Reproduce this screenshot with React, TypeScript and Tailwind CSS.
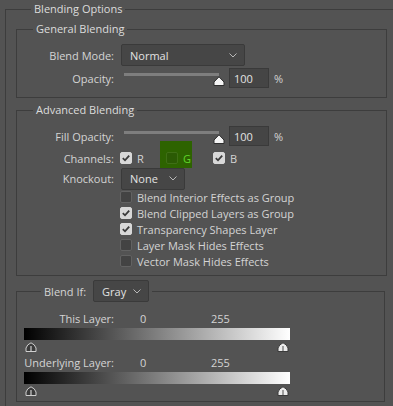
import type { ReactNode } from 'react';

function Chevron() {
  return (
    <svg width="8" height="5" viewBox="0 0 8 5" className="shrink-0">
      <path d="M0.5 0.5 L4 4 L7.5 0.5" fill="none" stroke="#b8b8b8" strokeWidth="1" />
    </svg>
  );
}

function Select({ value, width }: { value: string; width: string }) {
  return (
    <div
      className={`${width} h-[22px] flex items-center justify-between pl-[8px] pr-[7px] rounded-[2px] bg-[#464646] border border-[#3a3a3a] text-[#e2e2e2]`}
    >
      <span>{value}</span>
      <Chevron />
    </div>
  );
}

function Check({ checked }: { checked?: boolean }) {
  return (
    <span
      className={`w-[12px] h-[12px] shrink-0 rounded-[2px] flex items-center justify-center border ${
        checked ? 'bg-[#d8d8d8] border-[#d8d8d8]' : 'bg-[#434343] border-[#626262]'
      }`}
    >
      {checked && (
        <svg width="10" height="10" viewBox="0 0 10 10">
          <path d="M1.8 5.2 L4 7.3 L8.2 2.6" fill="none" stroke="#3a3a3a" strokeWidth="1.8" />
        </svg>
      )}
    </span>
  );
}

function Thumb() {
  return (
    <svg width="12" height="10" viewBox="0 0 12 10" className="block">
      <path d="M1 9.5 L1 6 L6 0.8 L11 6 L11 9.5 Z" fill="#f4f4f4" stroke="#2e2e2e" strokeWidth="1" />
    </svg>
  );
}

function RangeThumb({ dark }: { dark?: boolean }) {
  return (
    <svg width="12" height="10" viewBox="0 0 12 10" className="block">
      <path
        d="M1 9.5 L1 6 Q2 2.5 6 0.8 Q10 2.5 11 6 L11 9.5 Z"
        fill={dark ? '#3a3a3a' : '#ececec'}
        stroke={dark ? '#cfcfcf' : '#3a3a3a'}
        strokeWidth="1"
      />
      <path d="M6 4 L6 9" stroke={dark ? '#cfcfcf' : '#6a6a6a'} strokeWidth="1.2" />
    </svg>
  );
}

function Label({ children }: { children: ReactNode }) {
  return <span className="w-[97px] shrink-0 text-right">{children}</span>;
}

function OpacityRow({ label, className }: { label: string; className: string }) {
  return (
    <div className={`flex items-start h-[20px] ${className}`}>
      <span className="w-[97px] shrink-0 text-right self-center">{label}</span>
      <div className="ml-[10px] w-[105px] shrink-0">
        <div className="mt-[5px] h-[3px] w-[95px] bg-[#7e7e7e]" />
        <div className="ml-[89px]">
          <Thumb />
        </div>
      </div>
      <div className="w-[40px] h-[20px] flex items-center pl-[4px] bg-[#454545] border border-[#3a3a3a] text-[#e2e2e2]">
        100
      </div>
      <span className="ml-[5px] self-center">%</span>
    </div>
  );
}

function CheckRow({ label, checked }: { label: string; checked?: boolean }) {
  return (
    <div className="flex items-center h-[16px] ml-[103px]">
      <Check checked={checked} />
      <span className="ml-[5px]">{label}</span>
    </div>
  );
}

function GradientBar() {
  return (
    <>
      <div className="ml-[7px] w-[266px] h-[12px] bg-[linear-gradient(to_right,#000,#fff)]" />
      <div className="ml-[7px] w-[266px] flex justify-between px-[1px] mt-[2px]">
        <RangeThumb dark />
        <RangeThumb />
      </div>
    </>
  );
}

export default function App() {
  return (
    <div className="w-[393px] h-[406px] overflow-hidden bg-[#535353] text-[11px] leading-none text-[#d4d4d4] font-['Open_Sans',sans-serif]">
      <fieldset className="ml-[5px] w-[420px] border border-[#3d3d3d] pl-[10px] pb-[10px]">
        <legend className="ml-[15px] px-[3px] leading-[18px] text-[#dcdcdc]">Blending Options</legend>

        {/* General Blending */}
        <fieldset className="mt-[3px] w-[371px] border border-[#3d3d3d] pb-[9px]">
          <legend className="ml-[16px] px-[3px] leading-[16px] text-[#dcdcdc]">General Blending</legend>
          <div className="flex items-center h-[22px] mt-[7px]">
            <Label>Blend Mode:</Label>
            <div className="ml-[7px]">
              <Select value="Normal" width="w-[124px]" />
            </div>
          </div>
          <OpacityRow label="Opacity:" className="mt-[2px]" />
        </fieldset>

        {/* Advanced Blending */}
        <fieldset className="mt-[4px] w-[371px] border border-[#3d3d3d] pb-[6px]">
          <legend className="ml-[16px] px-[3px] leading-[16px] text-[#dcdcdc]">Advanced Blending</legend>
          <OpacityRow label="Fill Opacity:" className="mt-[8px]" />

          <div className="flex items-center h-[16px] mt-[4px]">
            <Label>Channels:</Label>
            <div className="ml-[6px] w-[46px] flex items-center">
              <Check checked />
              <span className="ml-[5px]">R</span>
            </div>
            <div className="relative w-[47px] flex items-center">
              <span className="absolute -left-[6px] -top-[11px] w-[32px] h-[27px] bg-[#2d6300]" />
              <span className="relative flex items-center">
                <span className="w-[12px] h-[12px] rounded-[2px] border border-[#3f6f16] bg-[#2b5a04]" />
                <span className="ml-[5px] text-[#5fd62a]">G</span>
              </span>
            </div>
            <div className="flex items-center">
              <Check checked />
              <span className="ml-[5px]">B</span>
            </div>
          </div>

          <div className="flex items-center h-[21px] mt-[2px]">
            <Label>Knockout:</Label>
            <div className="ml-[7px]">
              <Select value="None" width="w-[64px]" />
            </div>
          </div>

          <div>
            <CheckRow label="Blend Interior Effects as Group" />
            <CheckRow label="Blend Clipped Layers as Group" checked />
            <CheckRow label="Transparency Shapes Layer" checked />
            <CheckRow label="Layer Mask Hides Effects" />
            <CheckRow label="Vector Mask Hides Effects" />
          </div>
        </fieldset>

        {/* Blend If */}
        <fieldset className="mt-[7px] w-[369px] border border-[#3d3d3d] pb-[5px]">
          <legend className="ml-[24px] px-[3px] h-[16px]">
            <div className="flex items-center h-[22px] -mt-[3px]">
              <span>Blend If:</span>
              <div className="ml-[7px]">
                <Select value="Gray" width="w-[56px]" />
              </div>
            </div>
          </legend>

          <div className="flex items-center h-[14px] mt-[12px]">
            <Label>This Layer:</Label>
            <span className="ml-[26px] w-[71px]">0</span>
            <span>255</span>
          </div>
          <div className="mt-[3px]">
            <GradientBar />
          </div>

          <div className="flex items-center h-[14px] mt-[3px]">
            <Label>Underlying Layer:</Label>
            <span className="ml-[26px] w-[71px]">0</span>
            <span>255</span>
          </div>
          <div className="mt-[3px]">
            <GradientBar />
          </div>
        </fieldset>
      </fieldset>
    </div>
  );
}
